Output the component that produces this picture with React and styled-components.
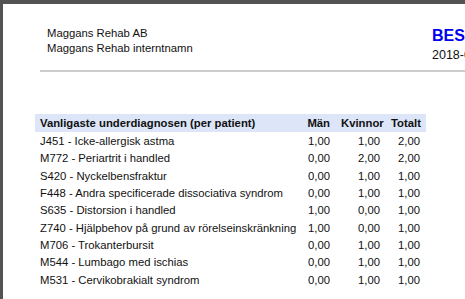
import React from 'react'
import styled, { createGlobalStyle } from 'styled-components'

const rows = [
  { name: 'J451 - Icke-allergisk astma', men: '1,00', women: '1,00', total: '2,00' },
  { name: 'M772 - Periartrit i handled', men: '0,00', women: '2,00', total: '2,00' },
  { name: 'S420 - Nyckelbensfraktur', men: '0,00', women: '1,00', total: '1,00' },
  { name: 'F448 - Andra specificerade dissociativa syndrom', men: '0,00', women: '1,00', total: '1,00' },
  { name: 'S635 - Distorsion i handled', men: '1,00', women: '0,00', total: '1,00' },
  { name: 'Z740 - Hjälpbehov på grund av rörelseinskränkning', men: '1,00', women: '0,00', total: '1,00' },
  { name: 'M706 - Trokanterbursit', men: '0,00', women: '1,00', total: '1,00' },
  { name: 'M544 - Lumbago med ischias', men: '0,00', women: '1,00', total: '1,00' },
  { name: 'M531 - Cervikobrakialt syndrom', men: '0,00', women: '1,00', total: '1,00' },
]

const App = () => {
  return (
    <>
      <GlobalStyle />
      <Viewer>
        <Page>
          <Header>
            <Company>
              <div>Maggans Rehab AB</div>
              <div>Maggans Rehab interntnamn</div>
            </Company>
            <Title>
              <Heading>BESÖKSSTATISTIK</Heading>
              <DateLine>2018-01-01 - 2018-12-31</DateLine>
            </Title>
          </Header>
          <Rule />
          <Table>
            <colgroup>
              <col style={{ width: 259 }} />
              <col style={{ width: 42 }} />
              <col style={{ width: 50 }} />
              <col style={{ width: 40 }} />
            </colgroup>
            <thead>
              <tr>
                <Th>Vanligaste underdiagnosen (per patient)</Th>
                <Th $num>Män</Th>
                <Th $num>Kvinnor</Th>
                <Th $num>Totalt</Th>
              </tr>
            </thead>
            <tbody>
              {rows.map((r) => (
                <tr key={r.name}>
                  <Td>{r.name}</Td>
                  <Td $num>{r.men}</Td>
                  <Td $num>{r.women}</Td>
                  <Td $num>{r.total}</Td>
                </tr>
              ))}
            </tbody>
          </Table>
        </Page>
      </Viewer>
    </>
  )
}

export default App

const GlobalStyle = createGlobalStyle`
html, body {
  margin: 0;
  padding: 0;
  overflow: hidden;
  background: #535353;
}
`
const Viewer = styled.div`
width: 465px;
height: 299px;
overflow: hidden;
padding: 4px 0 0 3px;
box-sizing: border-box;
`
const Page = styled.div`
width: 760px;
height: 900px;
background: #fff;
font-family: "Liberation Sans", Arial, sans-serif;
color: #111;
`
const Header = styled.div`
display: flex;
align-items: flex-start;
height: 66px;
padding: 22.4px 0 0 44px;
box-sizing: border-box;
`
const Company = styled.div`
width: 385px;
font-size: 11.3px;
line-height: 15px;
`
const Title = styled.div`
white-space: nowrap;
`
const Heading = styled.div`
font-size: 16px;
line-height: 20px;
font-weight: bold;
color: #0000f0;
`
const DateLine = styled.div`
font-size: 12.5px;
line-height: 18px;
`
const Rule = styled.div`
height: 2px;
margin-left: 37px;
background: #cccccc;
`
const Table = styled.table`
margin: 42px 0 0 32px;
width: 391px;
border-collapse: collapse;
table-layout: fixed;
font-size: 11.3px;
`
const Th = styled.th`
height: 18px;
padding: 0 ${(p) => (p.$num ? '6px' : '0')} 0 5px;
background: #dde6f8;
font-weight: bold;
text-align: ${(p) => (p.$num ? 'right' : 'left')};
white-space: nowrap;
`
const Td = styled.td`
height: 16.3px;
padding: 1px ${(p) => (p.$num ? '6px' : '0')} 0 5px;
text-align: ${(p) => (p.$num ? 'right' : 'left')};
white-space: nowrap;
overflow: visible;
`
